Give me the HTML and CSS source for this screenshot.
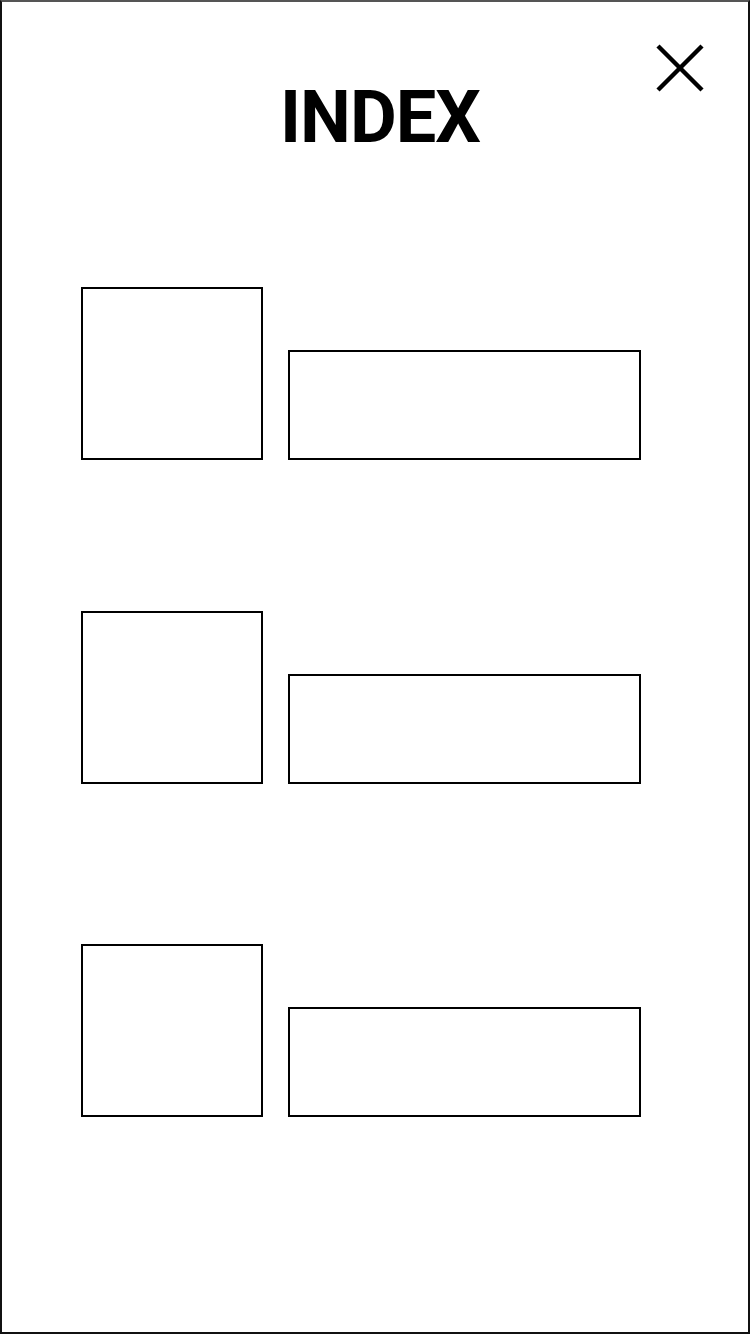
FILE: index.html
```html
<!DOCTYPE html>
<html lang="en">
<head>
  <meta charset="UTF-8" />
  <meta name="viewport" content="width=device-width, initial-scale=1.0" />
  <title>Index</title>
  <link rel="stylesheet" href="styles.css">
</head>
<body>

  <div class="frame">
    <header class="index-header">
      <h1 class="index-title">INDEX</h1>
      <button type="button" class="close-btn" aria-label="Close">
        <svg width="48" height="48" viewBox="0 0 48 48">
          <line x1="2" y1="2" x2="46" y2="46" />
          <line x1="46" y1="2" x2="2" y2="46" />
        </svg>
      </button>
    </header>

    <ul class="index-list">
      <li class="index-item">
        <div class="thumb"></div>
        <div class="label-box"></div>
      </li>
      <li class="index-item">
        <div class="thumb"></div>
        <div class="label-box"></div>
      </li>
      <li class="index-item index-item--last">
        <div class="thumb"></div>
        <div class="label-box"></div>
      </li>
    </ul>
  </div>

</body>
</html>
```

FILE: styles.css
```css
* {
  box-sizing: border-box;
}

body {
  margin: 0;
  background: #fff;
  color: #000;
  font-family: Roboto, 'Liberation Sans', sans-serif;
}

.frame {
  position: relative;
  width: 750px;
  height: 1334px;
  border: 2px solid #111;
  border-top-color: #555;
}

.index-header {
  padding-top: 80px;
  padding-left: 10px;
  text-align: center;
}

.index-title {
  margin: 0;
  font-size: 72px;
  line-height: 1;
  font-weight: 700;
  letter-spacing: -1px;
}

.close-btn {
  position: absolute;
  top: 42px;
  right: 44px;
  padding: 0;
  border: none;
  background: none;
  cursor: pointer;
}

.close-btn svg {
  display: block;
}

.close-btn line {
  stroke: #000;
  stroke-width: 4.5;
}

.index-list {
  list-style: none;
  margin: 133px 0 0;
  padding: 0 0 0 79px;
  display: flex;
  flex-direction: column;
  gap: 151px;
}

.index-item {
  display: flex;
  align-items: flex-end;
  gap: 25px;
}

.index-item--last {
  margin-top: 9px;
}

.thumb {
  width: 182px;
  height: 173px;
  border: 2px solid #000;
}

.label-box {
  width: 353px;
  height: 110px;
  border: 2px solid #000;
}
```
